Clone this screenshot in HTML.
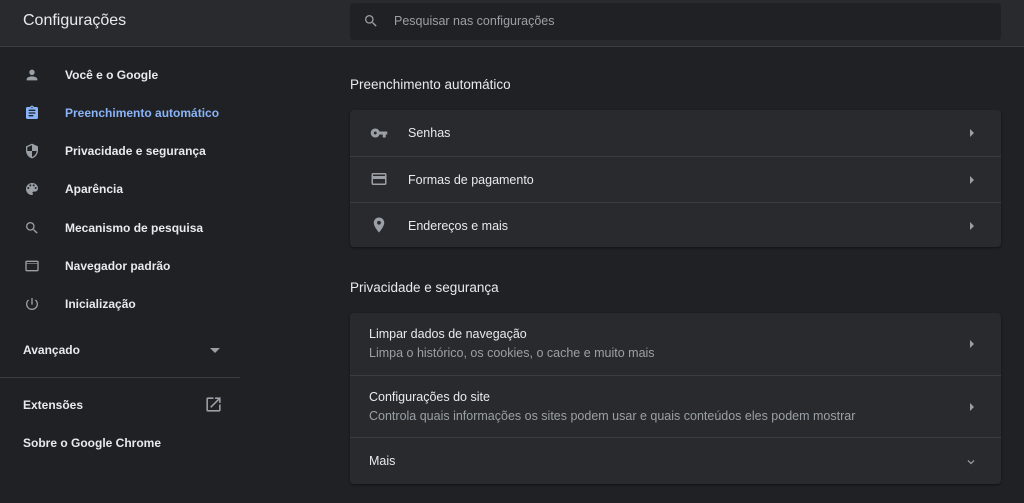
<!DOCTYPE html>
<html><head><meta charset="utf-8"><style>
*{margin:0;padding:0;box-sizing:border-box}
body{width:1024px;height:503px;overflow:hidden;background:#202124;font-family:"Liberation Sans",Arial,sans-serif;color:#e8eaed;position:relative}
.hdr{position:absolute;left:0;top:0;width:1024px;height:47px;background:#292a2d;border-bottom:1px solid #3c3d40}
.hdr .t{position:absolute;left:23px;top:12px;font-size:16px;color:#e8eaed}
.search{position:absolute;left:350px;top:3px;width:651px;height:37px;background:#202124;border-radius:3px}
.search span{position:absolute;left:44px;top:11px;font-size:12.5px;color:#9aa0a6}
.search svg{position:absolute;left:13px;top:10px}
.nav{position:absolute;left:0;font-size:12px;font-weight:bold;color:#e8eaed}
.nav svg{position:absolute;left:24px;top:-1px}
.nav span{position:absolute;left:65px;top:0;white-space:nowrap}
.blue{color:#8ab4f8}
.div{position:absolute;left:0;top:377px;width:240px;height:1px;background:#3c3d40}
.h2{position:absolute;left:350px;font-size:13.5px;color:#e8eaed}
.card{position:absolute;left:350px;width:651px;background:#292a2d;border-radius:4px;box-shadow:0 1px 2px rgba(0,0,0,.5)}
.row{position:relative;border-top:1px solid #3c3d40;font-size:12.5px}
.row:first-child{border-top:none}
.row .ic{position:absolute;left:20px}
.row .tx{position:absolute;left:58px}
.arr{position:absolute;left:620px;width:0;height:0;border-left:4px solid #9aa0a6;border-top:4px solid transparent;border-bottom:4px solid transparent}
.sub{color:#9aa0a6;font-size:12.5px}
</style></head><body>
<div class="hdr"><div class="t">Configurações</div>
<div class="search"><svg width="16" height="16" viewBox="0 0 24 24"><path fill="#9aa0a6" d="M15.5 14h-.79l-.28-.27A6.47 6.47 0 0016 9.5 6.5 6.5 0 109.5 16c1.61 0 3.09-.59 4.23-1.57l.27.28v.79l5 4.99L20.49 19l-4.99-5zm-6 0C7.01 14 5 11.99 5 9.5S7.01 5 9.5 5 14 7.01 14 9.5 11.99 14 9.5 14z"/></svg><span>Pesquisar nas configurações</span></div></div>

<div class="nav" style="top:68px"><svg width="16" height="16" viewBox="0 0 24 24"><path fill="#9aa0a6" d="M12 12c2.21 0 4-1.79 4-4s-1.79-4-4-4-4 1.79-4 4 1.79 4 4 4zm0 2c-2.67 0-8 1.34-8 4v2h16v-2c0-2.66-5.33-4-8-4z"/></svg><span>Você e o Google</span></div>
<div class="nav" style="top:106px"><svg width="16" height="16" viewBox="0 0 24 24"><path fill="#8ab4f8" d="M19 3h-4.18C14.4 1.84 13.3 1 12 1s-2.4.84-2.82 2H5c-1.1 0-2 .9-2 2v14c0 1.1.9 2 2 2h14c1.1 0 2-.9 2-2V5c0-1.1-.9-2-2-2zm-7 0c.55 0 1 .45 1 1s-.45 1-1 1-1-.45-1-1 .45-1 1-1zm2 14H7v-2h7v2zm3-4H7v-2h10v2zm0-4H7V7h10v2z"/></svg><span class="blue">Preenchimento automático</span></div>
<div class="nav" style="top:144px"><svg width="16" height="16" viewBox="0 0 24 24"><path fill="#9aa0a6" d="M12 1L3 5v6c0 5.55 3.84 10.74 9 12 5.16-1.26 9-6.45 9-12V5l-9-4zm0 10.99h7c-.53 4.12-3.28 7.790-7 8.94V12H5V6.3l7-3.11v8.8z"/></svg><span>Privacidade e segurança</span></div>
<div class="nav" style="top:182px"><svg width="16" height="16" viewBox="0 0 24 24"><path fill="#9aa0a6" d="M12 3a9 9 0 000 18c.83 0 1.5-.67 1.5-1.5 0-.39-.15-.74-.39-1.01-.23-.26-.38-.61-.38-.99 0-.83.67-1.5 1.5-1.5H16c2.76 0 5-2.240 5-5 0-4.42-4.03-8-9-8zm-5.5 9a1.5 1.5 0 110-3 1.5 1.5 0 010 3zm3-4a1.5 1.5 0 110-3 1.5 1.5 0 010 3zm5 0a1.5 1.5 0 110-3 1.5 1.5 0 010 3zm3 4a1.5 1.5 0 110-3 1.5 1.5 0 010 3z"/></svg><span>Aparência</span></div>
<div class="nav" style="top:221px"><svg width="16" height="16" viewBox="0 0 24 24"><path fill="#9aa0a6" d="M15.5 14h-.79l-.28-.27A6.47 6.47 0 0016 9.5 6.5 6.5 0 109.5 16c1.61 0 3.09-.59 4.23-1.57l.27.28v.79l5 4.99L20.49 19l-4.99-5zm-6 0C7.01 14 5 11.99 5 9.5S7.01 5 9.5 5 14 7.01 14 9.5 11.990 14 9.5 14z"/></svg><span>Mecanismo de pesquisa</span></div>
<div class="nav" style="top:259px"><svg width="16" height="16" viewBox="0 0 24 24"><path fill="#9aa0a6" d="M20 4H4c-1.1 0-2 .9-2 2v12c0 1.1.9 2 2 2h16c1.1 0 2-.9 2-2V6c0-1.1-.9-2-2-2zm0 14H4V9h16v9zM4 8V6h16v2z"/></svg><span>Navegador padrão</span></div>
<div class="nav" style="top:297px"><svg width="16" height="16" viewBox="0 0 24 24"><path fill="#9aa0a6" d="M13 3h-2v10h2V3zm4.83 2.17l-1.42 1.42A6.92 6.92 0 0119 12c0 3.87-3.13 7-7 7A6.995 6.995 0 017.58 6.58L6.17 5.17A8.932 8.932 0 003 12a9 9 0 0018 0c0-2.74-1.23-5.18-3.17-6.830z"/></svg><span>Inicialização</span></div>
<div class="nav" style="top:343px"><span style="left:23px">Avançado</span></div>
<div style="position:absolute;left:210px;top:348px;border-top:5px solid #9aa0a6;border-left:5px solid transparent;border-right:5px solid transparent"></div>
<div class="div"></div>
<div class="nav" style="top:398px"><span style="left:23px">Extensões</span></div>
<svg style="position:absolute;left:204px;top:395px" width="19" height="19" viewBox="0 0 24 24"><path fill="#9aa0a6" d="M19 19H5V5h7V3H5a2 2 0 00-2 2v14a2 2 0 002 2h14c1.1 0 2-.9 2-2v-7h-2v7zM14 3v2h3.59l-9.83 9.83 1.41 1.41L19 6.41V10h2V3h-7z"/></svg>
<div class="nav" style="top:436px"><span style="left:23px">Sobre o Google Chrome</span></div>

<div class="h2" style="top:77px">Preenchimento automático</div>
<div class="card" style="top:110px">
<div class="row" style="height:46px"><svg class="ic" style="top:14px" width="18" height="18" viewBox="0 0 24 24"><path fill="#9aa0a6" d="M12.65 10A5.99 5.99 0 007 6c-3.31 0-6 2.69-6 6s2.69 6 6 6a5.99 5.99 0 005.65-4H17v4h4v-4h2v-4H12.65zM7 14c-1.1 0-2-.9-2-2s.9-2 2-2 2 .9 2 2-.9 2-2 2z"/></svg><span class="tx" style="top:16px">Senhas</span><div class="arr" style="top:19px"></div></div>
<div class="row" style="height:46px"><svg class="ic" style="top:13px" width="18" height="18" viewBox="0 0 24 24"><path fill="#9aa0a6" d="M20 4H4c-1.11 0-1.99.89-1.99 2L2 18c0 1.11.89 2 2 2h16c1.11 0 2-.89 2-2V6c0-1.11-.89-2-2-2zm0 14H4v-6h16v6zm0-10H4V6h16v2z"/></svg><span class="tx" style="top:16px">Formas de pagamento</span><div class="arr" style="top:19px"></div></div>
<div class="row" style="height:45px"><svg class="ic" style="top:13px" width="18" height="18" viewBox="0 0 24 24"><path fill="#9aa0a6" d="M12 2C8.13 2 5 5.13 5 9c0 5.25 7 13 7 13s7-7.75 7-13c0-3.87-3.13-7-7-7zm0 9.5a2.5 2.5 0 010-5 2.5 2.5 0 010 5z"/></svg><span class="tx" style="top:16px">Endereços e mais</span><div class="arr" style="top:19px"></div></div>
</div>

<div class="h2" style="top:280px">Privacidade e segurança</div>
<div class="card" style="top:313px">
<div class="row" style="height:62px"><span class="tx" style="left:19px;top:14px">Limpar dados de navegação</span><span class="tx sub" style="left:19px;top:33px">Limpa o histórico, os cookies, o cache e muito mais</span><div class="arr" style="top:27px"></div></div>
<div class="row" style="height:62px"><span class="tx" style="left:19px;top:14px">Configurações do site</span><span class="tx sub" style="left:19px;top:33px">Controla quais informações os sites podem usar e quais conteúdos eles podem mostrar</span><div class="arr" style="top:27px"></div></div>
<div class="row" style="height:47px"><span class="tx" style="left:19px;top:16px">Mais</span><svg style="position:absolute;left:614px;top:17px" width="14" height="14" viewBox="0 0 24 24"><path fill="#9aa0a6" d="M7.41 8.59L12 13.17l4.59-4.58L18 10l-6 6-6-6z"/></svg></div>
</div>
</body></html>
